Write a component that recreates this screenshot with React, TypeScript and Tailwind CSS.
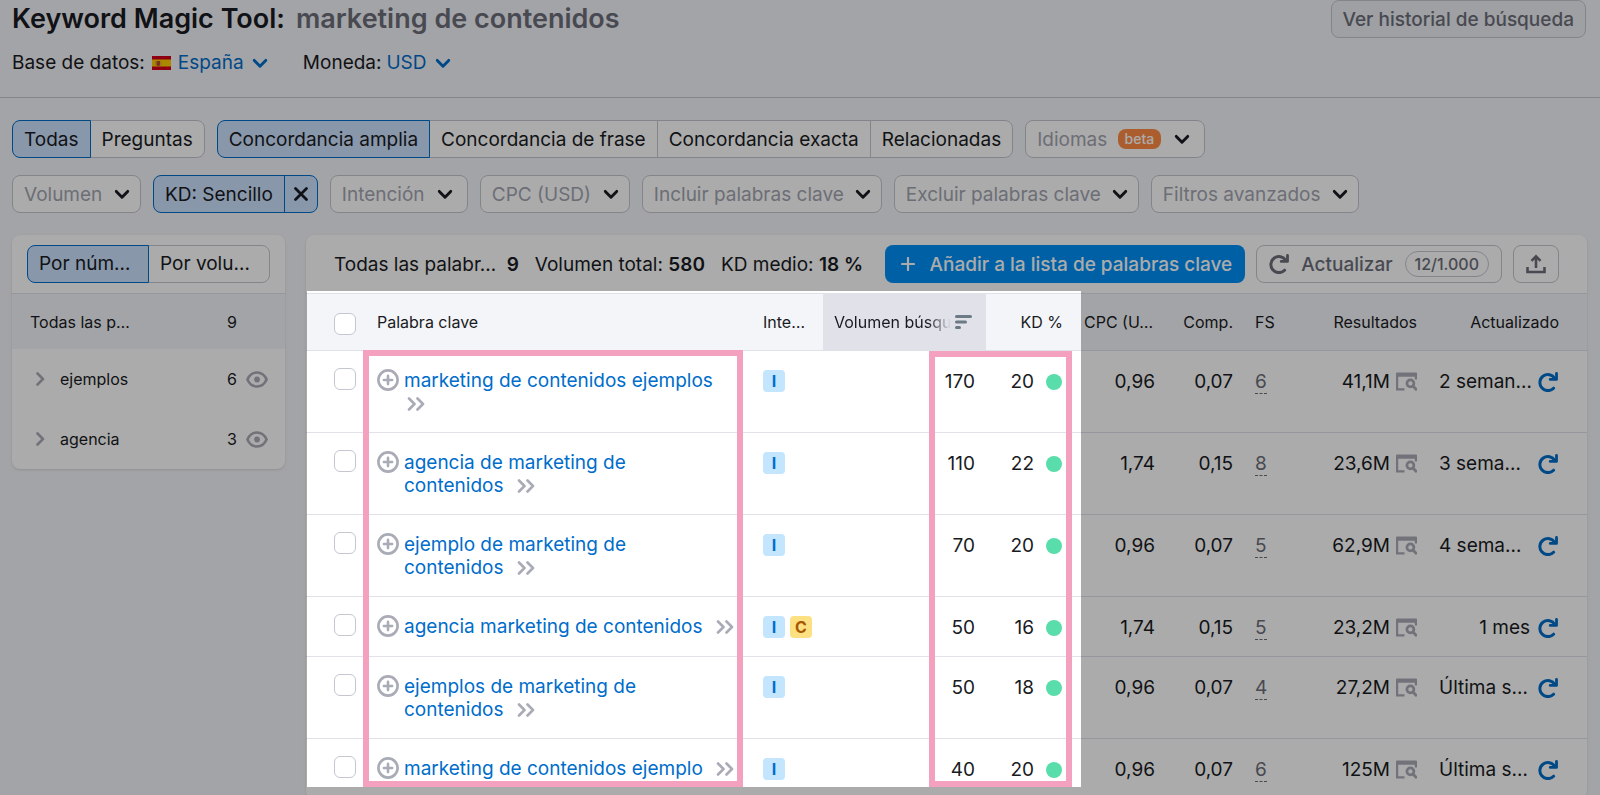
import type { ReactNode } from "react";

type Row = {
  keyword: string;
  intents: string[];
  volume: string;
  kd: string;
  cpc: string;
  comp: string;
  fs: string;
  results: string;
  updated: string;
};

const rows: Row[] = [
  { keyword: "marketing de contenidos ejemplos\n", intents: ["I"], volume: "170", kd: "20", cpc: "0,96", comp: "0,07", fs: "6", results: "41,1M", updated: "2 seman…" },
  { keyword: "agencia de marketing de\ncontenidos", intents: ["I"], volume: "110", kd: "22", cpc: "1,74", comp: "0,15", fs: "8", results: "23,6M", updated: "3 sema…" },
  { keyword: "ejemplo de marketing de\ncontenidos", intents: ["I"], volume: "70", kd: "20", cpc: "0,96", comp: "0,07", fs: "5", results: "62,9M", updated: "4 sema…" },
  { keyword: "agencia marketing de contenidos", intents: ["I", "C"], volume: "50", kd: "16", cpc: "1,74", comp: "0,15", fs: "5", results: "23,2M", updated: "1 mes" },
  { keyword: "ejemplos de marketing de\ncontenidos", intents: ["I"], volume: "50", kd: "18", cpc: "0,96", comp: "0,07", fs: "4", results: "27,2M", updated: "Última s…" },
  { keyword: "marketing de contenidos ejemplo", intents: ["I"], volume: "40", kd: "20", cpc: "0,96", comp: "0,07", fs: "6", results: "125M", updated: "Última s…" },
];

const groups = [
  { name: "ejemplos", count: 6 },
  { name: "agencia", count: 3 },
];

const filters = ["CPC (USD)", "Incluir palabras clave", "Excluir palabras clave", "Filtros avanzados"];

function Chevron({ className = "" }: { className?: string }) {
  return (
    <svg viewBox="0 0 16 16" className={`size-4 ${className}`} fill="none" stroke="currentColor" strokeWidth="2.9" strokeLinecap="round" strokeLinejoin="round" aria-hidden>
      <path d="M2.3 5.4L8 11.2l5.700-5.800" />
    </svg>
  );
}

function DoubleChevron() {
  return (
    <svg viewBox="0 0 18 14" className="ml-[3px] inline-block h-[14px] w-[18px] align-[-1px]" fill="none" stroke="#a9abb6" strokeWidth="2.6" strokeLinecap="round" strokeLinejoin="round" aria-hidden>
      <path d="M2 1.5l5.5 5.5L2 12.5M10.5 1.5L16 7l-5.5 5.5" />
    </svg>
  );
}

function ReloadIcon({ className = "" }: { className?: string }) {
  return (
    <svg viewBox="0 0 20 20" className={`size-5 shrink-0 ${className}`} fill="none" stroke="currentColor" strokeWidth="3" aria-hidden>
      <path d="M15.6 16.200A8 8 0 1 1 16.800 6.600" strokeLinecap="round" />
      <path d="M18.500 1.500v5.900h-6.300" strokeLinejoin="round" strokeLinecap="round" strokeWidth="2.8" />
    </svg>
  );
}

function SerpIcon() {
  return (
    <svg viewBox="0 0 21 19" className="h-[19px] w-[21px] shrink-0" fill="none" stroke="#a9abb6" strokeWidth="2.2" aria-hidden>
      <path d="M19.900 7.500V1.500M1.100 1.500v15.900h7.400" />
      <path d="M0 1.500Q0 .5 1 .5h19q1 0 1 1v3.300H0z" fill="#a9abb6" stroke="none" />
      <circle cx="14.400" cy="11.400" r="3.500" strokeWidth="2.700" />
      <path d="M17.200 14.300l2.800 3" strokeWidth="2.800" strokeLinecap="round" />
    </svg>
  );
}

function PlusCircle() {
  return (
    <svg viewBox="0 0 22 22" className="size-[22px]" fill="none" stroke="#a9abb6" strokeWidth="2.6" strokeLinecap="round" aria-hidden>
      <circle cx="11" cy="11" r="9.600" />
      <path d="M11 6.900v8.200M6.900 11h8.200" />
    </svg>
  );
}

function EyeIcon() {
  return (
    <svg viewBox="0 0 22 17" className="h-[17px] w-[22px]" fill="none" stroke="#a9abb6" strokeWidth="2.6" aria-hidden>
      <path d="M1.400 8.500C3.400 4 7 1.500 11 1.500s7.600 2.500 9.600 7c-2 4.500-5.600 7-9.600 7s-7.600-2.500-9.600-7z" strokeLinejoin="round" />
      <circle cx="11" cy="8.500" r="2.900" fill="#a9abb6" stroke="none" />
    </svg>
  );
}

function SpainFlag() {
  return (
    <svg viewBox="0 0 19 14" className="h-[14px] w-[19px]" aria-hidden>
      <path d="M0 0h19v14H0z" fill="#d4001a" />
      <path d="M0 3.500h19v7H0z" fill="#ffce00" />
      <path d="M4.500 5h3.500v3.500a1.750 1.500 0 0 1-3.500 0z" fill="#b8502a" />
      <path d="M3.600 5.500v4M8.900 5.500v4" stroke="#c99a5a" strokeWidth=".8" />
    </svg>
  );
}

function FilterSelect({ label, badge, wide = false }: { label: string; badge?: string; wide?: boolean }) {
  const padding = badge ? "pr-24" : wide ? "pr-[42px]" : "pr-[37px]";
  return (
    <span className="relative inline-flex items-center">
      <select
        aria-label={label}
        className={`h-[38px] appearance-none rounded-lg border border-[#c4c7cf] bg-white pl-[11px] text-[#a2a5b0] ${padding}`}
      >
        <option>{label}</option>
      </select>
      {badge && (
        <span className="pointer-events-none absolute right-[44px] rounded-lg bg-[#ff8b43] px-[7px] text-sm leading-5 font-medium text-white">{badge}</span>
      )}
      <Chevron className={`pointer-events-none absolute text-[#191b23] ${badge || wide ? "right-[15px]" : "right-[11px]"}`} />
    </span>
  );
}

function LinkSelect({ label, value }: { label: string; value: string }) {
  return (
    <span className="relative inline-flex items-center text-[#006dca]">
      <select aria-label={label} className="appearance-none bg-transparent pr-6">
        <option>{value}</option>
      </select>
      <Chevron className="pointer-events-none absolute right-0" />
    </span>
  );
}

function Segmented({ items, className = "", itemClassName = "" }: { items: string[]; className?: string; itemClassName?: string }) {
  return (
    <div className={`flex h-[38px] ${className}`}>
      {items.map((item, i) => (
        <button
          key={item}
          type="button"
          aria-pressed={i === 0}
          className={`-ml-px border px-[11px] whitespace-nowrap first:ml-0 first:rounded-l-lg last:rounded-r-lg ${itemClassName} ${
            i === 0 ? "relative border-[#006dca] bg-[#cce1ff]" : "border-[#c4c7cf] bg-white"
          }`}
        >
          {item}
        </button>
      ))}
    </div>
  );
}

function Intent({ kind }: { kind: string }) {
  return (
    <span className={`flex size-[22px] items-center justify-center rounded text-base font-bold ${kind === "I" ? "bg-[#c4e5fe] text-[#006dca]" : "bg-[#fce081] text-[#a75800]"}`}>
      {kind}
    </span>
  );
}

function Check({ label }: { label: string }) {
  return <input type="checkbox" aria-label={label} className="block size-[22px] appearance-none rounded-md border border-[#c4c7cf] bg-white" />;
}

function Th({ children, className = "" }: { children?: ReactNode; className?: string }) {
  return <th scope="col" className={`h-[58px] border-y border-[#e0e1e9] text-base font-normal whitespace-nowrap ${className}`}>{children}</th>;
}

function Td({ children, className = "" }: { children?: ReactNode; className?: string }) {
  return <td className={`h-[60px] border-b border-[#e0e1e9] align-top whitespace-nowrap ${className}`}>{children}</td>;
}

function Header() {
  return (
    <header className="flex h-[98px] items-start justify-between border-b border-[#c4c7cf] pr-[14px] pl-3">
      <div>
        <h1 className="flex gap-[11px] pt-[2px] text-[27px] leading-[34px] font-semibold">
          Keyword Magic Tool: <span className="text-[#6c6e79]">marketing de contenidos</span>
        </h1>
        <div className="mt-[15px] flex items-center gap-[35px] leading-6">
          <div className="flex items-center gap-[7px]">
            Base de datos: <SpainFlag /> <LinkSelect label="Base de datos" value="España" />
          </div>
          <div className="flex items-center gap-[5px]">
            Moneda: <LinkSelect label="Moneda" value="USD" />
          </div>
        </div>
      </div>
      <button type="button" className="h-[38px] rounded-lg border border-[#c4c7cf] bg-[#edeff4] px-[11px] font-medium text-[#6c6e79]">
        Ver historial de búsqueda
      </button>
    </header>
  );
}

function Filters() {
  return (
    <div className="flex flex-col gap-[17px] px-3 pt-[22px]">
      <div className="flex gap-3">
        <Segmented items={["Todas", "Preguntas"]} />
        <Segmented items={["Concordancia amplia", "Concordancia de frase", "Concordancia exacta", "Relacionadas"]} />
        <FilterSelect label="Idiomas" badge="beta" />
      </div>
      <div className="flex gap-3">
        <FilterSelect label="Volumen" />
        <div className="flex h-[38px] rounded-lg border border-[#006dca] bg-[#cce1ff]">
          <button type="button" className="border-r border-[#006dca] px-[11px]">KD: Sencillo</button>
          <button type="button" aria-label="Quitar filtro KD" className="px-2">
            <svg viewBox="0 0 16 16" className="size-4" stroke="currentColor" strokeWidth="2.800" strokeLinecap="round" aria-hidden>
              <path d="M2.500 2.500l11 11M13.500 2.500l-11 11" />
            </svg>
          </button>
        </div>
        <FilterSelect label="Intención" wide />
        {filters.map((label) => (
          <FilterSelect key={label} label={label} />
        ))}
      </div>
    </div>
  );
}

function Sidebar() {
  return (
    <aside className="w-[273px] shrink-0 overflow-hidden rounded-lg bg-white text-base shadow-sm">
      <div className="px-[15px] py-[10px]">
        <Segmented items={["Por núm…", "Por volu…"]} className="text-[19px]" itemClassName="flex-1 text-left" />
      </div>
      <div className="flex h-14 items-center border-t border-[#e0e1e9] bg-[#f4f5f9] pr-[48px] pl-[18px]">
        <span className="flex-1">Todas las p…</span>
        <span>9</span>
      </div>
      {groups.map((group) => (
        <div key={group.name} className="flex h-[60px] items-center pr-[17px] pl-6">
          <svg viewBox="0 0 9 14" className="mr-[15px] h-[14px] w-[9px]" fill="none" stroke="#a9abb6" strokeWidth="2.600" strokeLinecap="round" strokeLinejoin="round" aria-hidden>
            <path d="M1.500 1.500L7 7l-5.500 5.500" />
          </svg>
          <span className="flex-1">{group.name}</span>
          <span className="mr-[9px]">{group.count}</span>
          <button type="button" aria-label={`Ocultar ${group.name}`}>
            <EyeIcon />
          </button>
        </div>
      ))}
    </aside>
  );
}

function Toolbar() {
  return (
    <div className="flex h-[58px] items-center justify-between px-7 whitespace-nowrap">
      <div className="flex gap-4">
        <span>Todas las palabr… <b className="ml-[5px] font-semibold">9</b></span>
        <span>Volumen total: <b className="font-semibold">580</b></span>
        <span>KD medio: <b className="font-semibold">18 %</b></span>
      </div>
      <div className="flex gap-[11px]">
        <button type="button" className="flex h-[38px] items-center gap-[15px] rounded-lg bg-[#008ff8] pr-[13px] pl-4 font-medium text-white">
          <svg viewBox="0 0 14 14" className="size-[14px]" stroke="currentColor" strokeWidth="2.200" strokeLinecap="round" aria-hidden>
            <path d="M7 1v12M1 7h12" />
          </svg>
          Añadir a la lista de palabras clave
        </button>
        <button type="button" className="flex h-[38px] items-center rounded-lg border border-[#c4c7cf] px-3 font-medium text-[#6c6e79]">
          <ReloadIcon className="mr-3" />
          Actualizar
          <span className="ml-3 rounded-full border border-[#c4c7cf] px-[9px] text-base leading-6">12/1.000</span>
        </button>
        <button type="button" aria-label="Exportar" className="flex h-[38px] w-[46px] items-center justify-center rounded-lg border border-[#c4c7cf] text-[#6c6e79]">
          <svg viewBox="0 0 20 20" className="size-5" fill="none" stroke="currentColor" strokeWidth="2.600" aria-hidden>
            <path d="M1.500 13v5h17v-5M10 14V3M5.500 6.800L10 2.300l4.500 4.500" />
          </svg>
        </button>
      </div>
    </div>
  );
}

function KeywordTable() {
  return (
    <table className="w-full table-fixed border-separate border-spacing-0">
      <colgroup>
        <col className="w-[59px]" />
        <col />
        <col className="w-[72px]" />
        <col className="w-[163px]" />
        <col className="w-[88px]" />
        <col className="w-[92px]" />
        <col className="w-[79px]" />
        <col className="w-[79px]" />
        <col className="w-[105px]" />
        <col className="w-[158px]" />
      </colgroup>
      <thead className="bg-[#f4f5f9] text-left">
        <tr>
          <Th className="pt-1 pl-7"><Check label="Seleccionar todo" /></Th>
          <Th className="pl-3">Palabra clave</Th>
          <Th className="pl-3">Inte…</Th>
          <Th className="bg-[#e0e1e9] pl-[11px]">
            <div className="flex items-center gap-1">
              <span className="[mask-image:linear-gradient(to_right,black_80%,transparent)]">Volumen búsqu</span>
              <svg viewBox="0 0 17 14" className="h-[14px] w-[17px]" stroke="#6b7a85" strokeWidth="3" strokeLinecap="round" aria-hidden>
                <path d="M1.500 1.500h14M1.500 7h9M1.500 12.500h3" />
              </svg>
            </div>
          </Th>
          <Th className="pr-[11px] text-right">KD %</Th>
          <Th className="pl-[10px]">CPC (U…</Th>
          <Th className="pr-3 text-right">Comp.</Th>
          <Th className="pl-[10px]">FS</Th>
          <Th className="pr-3 text-right">Resultados</Th>
          <Th className="pr-7 text-right">Actualizado</Th>
        </tr>
      </thead>
      <tbody>
        {rows.map((row) => (
          <tr key={row.keyword}>
            <Td className="pt-[17px] pl-7"><Check label={row.keyword} /></Td>
            <Td className="pt-[18px] pb-[17px] pl-3">
              <div className="flex items-start gap-[5px]">
                <button type="button" aria-label="Añadir"><PlusCircle /></button>
                <span className="whitespace-pre">
                  <a href="#" className="text-[#006dca]">{row.keyword}</a>
                  {row.keyword.endsWith("\n") ? "" : "  "}
                  <DoubleChevron />
                </span>
              </div>
            </Td>
            <Td className="pt-[19px] pl-3">
              <div className="flex gap-[5px]">
                {row.intents.map((kind) => <Intent key={kind} kind={kind} />)}
              </div>
            </Td>
            <Td className="pt-[19px] pr-[11px] text-right">{row.volume}</Td>
            <Td className="pt-[19px] pr-3">
              <div className="flex items-center justify-end gap-3">
                {row.kd}
                <span className="size-4 rounded-full bg-[#59ddaa]" />
              </div>
            </Td>
            <Td className="pt-[19px] pr-[11px] text-right">{row.cpc}</Td>
            <Td className="pt-[19px] pr-3 text-right">{row.comp}</Td>
            <Td className="pt-[19px] pl-[10px]">
              <span className="border-b border-dashed border-[#6c6e79] text-[#6c6e79]">{row.fs}</span>
            </Td>
            <Td className="pt-[19px] pr-3">
              <div className="flex items-center justify-end gap-[6px]">
                {row.results} <SerpIcon />
              </div>
            </Td>
            <Td className="pt-[19px] pr-[29px] pl-[10px]">
              <div className={`flex items-center ${row.updated === "1 mes" ? "justify-end gap-2" : "justify-between"}`}>
                {row.updated}
                <button type="button" aria-label="Actualizar" className="text-[#006dca]"><ReloadIcon /></button>
              </div>
            </Td>
          </tr>
        ))}
      </tbody>
    </table>
  );
}

/* Dims the whole page except the highlighted columns */
function Spotlight() {
  return (
    <div className="pointer-events-none absolute top-[56px] right-[506px] left-px h-[496px] shadow-[0_0_0_2000px_rgba(0,0,0,0.33)]">
      <div className="absolute top-[59px] right-[338px] bottom-0 left-[56px] border-6 border-[#f4a1bf]" />
      <div className="absolute top-[60px] right-[9px] bottom-0 w-[143px] border-6 border-[#f4a1bf]" />
    </div>
  );
}

export default function App() {
  return (
    <div className="h-screen overflow-hidden bg-[#f4f5f9] font-[Inter,sans-serif] text-[19px] leading-[23px] text-[#191b23]">
      <Header />
      <Filters />
      <main className="flex items-start gap-[21px] pt-[22px] pr-[13px] pl-3">
        <Sidebar />
        <section className="relative min-w-0 flex-1 rounded-lg bg-white shadow-sm">
          <Toolbar />
          <KeywordTable />
          <Spotlight />
        </section>
      </main>
    </div>
  );
}
